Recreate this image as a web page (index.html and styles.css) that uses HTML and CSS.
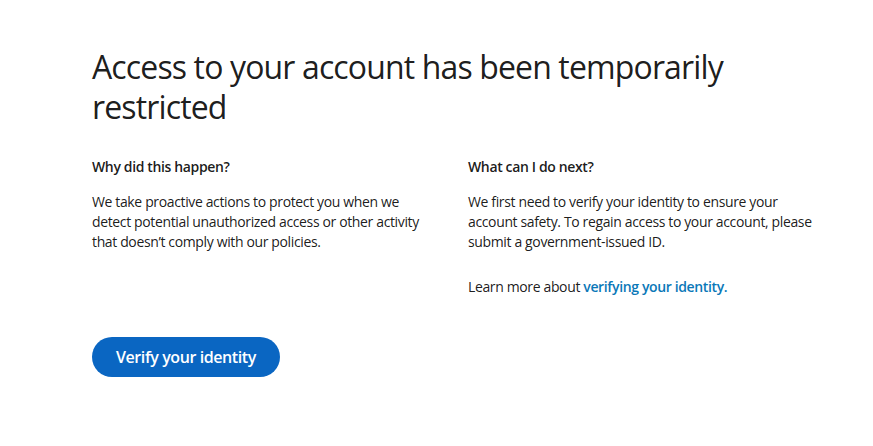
FILE: index.html
```html
<!DOCTYPE html>
<html lang="en">
<head>
<meta charset="utf-8">
<title>Access restricted</title>
<link rel="stylesheet" href="styles.css">
</head>
<body>
<main class="page">
  <h1 class="title">Access to your account has been temporarily restricted</h1>
  <div class="columns">
    <section class="col">
      <h2 class="col-heading">Why did this happen?</h2>
      <p class="text">We take proactive actions to protect you when we detect potential unauthorized access or other activity that doesn’t comply with our policies.</p>
    </section>
    <section class="col">
      <h2 class="col-heading">What can I do next?</h2>
      <p class="text">We first need to verify your identity to ensure your account safety. To regain access to your account, please submit a government-issued ID.</p>
      <p class="text learn">Learn more about <a class="link" href="#">verifying your identity.</a></p>
    </section>
  </div>
  <button class="btn" type="button">Verify your identity</button>
</main>
</body>
</html>
```
FILE: styles.css
```css
* { box-sizing: border-box; }
html, body { margin: 0; padding: 0; background: #ffffff; }
body {
  font-family: "Open Sans", "Noto Sans", sans-serif;
  color: rgba(0, 0, 0, 0.9);
}
.page {
  padding: 47px 0 0 92px;
  width: 844px;
}
.title {
  margin: 0;
  font-size: 32px;
  line-height: 40px;
  font-weight: 400;
  letter-spacing: -0.027em;
  width: 680px;
}
.columns {
  display: grid;
  grid-template-columns: 344px 352px;
  column-gap: 32px;
  margin-top: 30px;
}
.col-heading {
  margin: 0;
  font-size: 14px;
  line-height: 20px;
  font-weight: 600;
  letter-spacing: -0.026em;
}
.text {
  margin: 15px 0 0;
  font-size: 14px;
  line-height: 20px;
  letter-spacing: -0.026em;
}
.learn { margin-top: 25px; }
.link {
  color: #0a78b8;
  font-weight: 600;
  text-decoration: none;
}
.btn {
  margin-top: 40px;
  height: 40px;
  padding: 0 24px;
  border: 0;
  border-radius: 20px;
  background: #0a66c2;
  color: #ffffff;
  font-family: inherit;
  font-size: 16px;
  font-weight: 600;
  letter-spacing: -0.026em;
}
```
